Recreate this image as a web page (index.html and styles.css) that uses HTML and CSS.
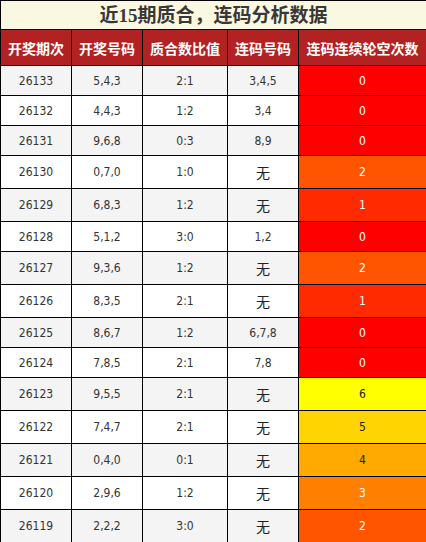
FILE: index.html
```html
<!DOCTYPE html>
<html lang="zh-CN">
<head>
    <meta charset="UTF-8">
    <meta name="viewport" content="width=device-width, initial-scale=1.0">
    <title>近15期质合，连码分析数据</title>
    <link rel="stylesheet" href="styles.css">
</head>
<body>
    <table class="data-table">
        <colgroup>
            <col class="col-issue">
            <col class="col-code">
            <col class="col-ratio">
            <col class="col-link">
            <col class="col-gap">
        </colgroup>
        <thead>
            <tr>
                <th class="title" colspan="5">近<span class="num">15</span>期质合，连码分析数据</th>
            </tr>
            <tr class="head">
                <th>开奖期次</th>
                <th>开奖号码</th>
                <th>质合数比值</th>
                <th>连码号码</th>
                <th>连码连续轮空次数</th>
            </tr>
        </thead>
        <tbody>
            <tr><td>26133</td><td>5,4,3</td><td>2:1</td><td>3,4,5</td><td class="gap gap-0">0</td></tr>
            <tr><td>26132</td><td>4,4,3</td><td>1:2</td><td>3,4</td><td class="gap gap-0">0</td></tr>
            <tr><td>26131</td><td>9,6,8</td><td>0:3</td><td>8,9</td><td class="gap gap-0">0</td></tr>
            <tr class="tall"><td>26130</td><td>0,7,0</td><td>1:0</td><td class="none">无</td><td class="gap gap-2">2</td></tr>
            <tr class="tall"><td>26129</td><td>6,8,3</td><td>1:2</td><td class="none">无</td><td class="gap gap-1">1</td></tr>
            <tr><td>26128</td><td>5,1,2</td><td>3:0</td><td>1,2</td><td class="gap gap-0">0</td></tr>
            <tr class="tall"><td>26127</td><td>9,3,6</td><td>1:2</td><td class="none">无</td><td class="gap gap-2">2</td></tr>
            <tr class="tall"><td>26126</td><td>8,3,5</td><td>2:1</td><td class="none">无</td><td class="gap gap-1">1</td></tr>
            <tr><td>26125</td><td>8,6,7</td><td>1:2</td><td>6,7,8</td><td class="gap gap-0">0</td></tr>
            <tr><td>26124</td><td>7,8,5</td><td>2:1</td><td>7,8</td><td class="gap gap-0">0</td></tr>
            <tr class="tall"><td>26123</td><td>9,5,5</td><td>2:1</td><td class="none">无</td><td class="gap gap-6">6</td></tr>
            <tr class="tall"><td>26122</td><td>7,4,7</td><td>2:1</td><td class="none">无</td><td class="gap gap-5">5</td></tr>
            <tr class="tall"><td>26121</td><td>0,4,0</td><td>0:1</td><td class="none">无</td><td class="gap gap-4">4</td></tr>
            <tr class="tall"><td>26120</td><td>2,9,6</td><td>1:2</td><td class="none">无</td><td class="gap gap-3">3</td></tr>
            <tr class="tall"><td>26119</td><td>2,2,2</td><td>3:0</td><td class="none">无</td><td class="gap gap-2">2</td></tr>
        </tbody>
    </table>
</body>
</html>
```

FILE: styles.css
```css
* {
    margin: 0;
    padding: 0;
    box-sizing: border-box;
}

body {
    background: #fff;
    font-family: "DejaVu Sans Condensed", "DejaVu Sans", "Noto Sans CJK SC", sans-serif;
}

.data-table {
    width: 426px;
    table-layout: fixed;
    border-collapse: collapse;
}

.col-issue { width: 71px; }
.col-code { width: 71px; }
.col-ratio { width: 85px; }
.col-link { width: 71px; }
.col-gap { width: 128px; }

.data-table td,
.data-table th {
    border: 1px solid #000;
    text-align: center;
    vertical-align: middle;
}

.data-table th.title {
    height: 28px;
    background: #fbf8e1;
    color: #383838;
    font-family: "Noto Sans CJK SC", sans-serif;
    font-size: 19px;
    font-weight: 700;
    line-height: 26px;
}

.title .num {
    font-family: "Liberation Serif", serif;
}

.head th {
    height: 36px;
    background: #b22222;
    color: #fff;
    font-family: "Noto Sans CJK SC", sans-serif;
    font-size: 14px;
    font-weight: 700;
}

.data-table tbody td {
    height: 30px;
    font-size: 12px;
    color: #333;
    line-height: 14px;
    background: #fff;
}

.data-table tbody tr:nth-child(odd) td {
    background: #f4f4f4;
}

.data-table tbody tr.tall td {
    height: 33px;
}

.data-table tbody td.none {
    font-family: "Noto Sans CJK SC", sans-serif;
    font-size: 14px;
    color: #222;
}

.data-table tbody tr td.gap {
    color: #fff;
}

.data-table tbody tr td.gap-0 { background: #ff0000; }
.data-table tbody tr td.gap-1 { background: #ff2a00; }
.data-table tbody tr td.gap-2 { background: #ff5500; }
.data-table tbody tr td.gap-3 { background: #ff8000; }
.data-table tbody tr td.gap-4 { background: #ffaa00; color: #222; }
.data-table tbody tr td.gap-5 { background: #ffd400; color: #222; }
.data-table tbody tr td.gap-6 { background: #ffff00; color: #222; }
```
